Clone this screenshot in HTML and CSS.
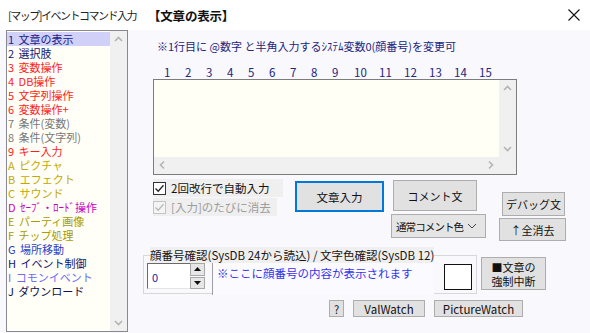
FILE: index.html
```html
<!DOCTYPE html>
<html lang="ja">
<head>
    <meta charset="UTF-8">
    <title>イベントコマンド入力</title>
    <link rel="stylesheet" href="styles.css">
</head>
<body>
    <div class="titlebar">
        <span class="wintitle">[マップ]イベントコマンド入力</span>
        <span class="cmdtitle">【文章の表示】</span>
        <svg class="close" width="12" height="12" viewBox="0 0 12 12"><path d="M0.5 0.5 L11.5 11.5 M11.5 0.5 L0.5 11.5" stroke="#111" stroke-width="1.1" fill="none"/></svg>
    </div>

    <div class="main">
        <div class="cmdlist">
            <ul class="items">
                <li class="sel c-blue">1 文章の表示</li>
                <li class="c-navy">2 選択肢</li>
                <li class="c-red">3 変数操作</li>
                <li class="c-red">4 DB操作</li>
                <li class="c-red">5 文字列操作</li>
                <li class="c-red">6 変数操作+</li>
                <li class="c-gray">7 条件(変数)</li>
                <li class="c-gray">8 条件(文字列)</li>
                <li class="c-red">9 キー入力</li>
                <li class="c-yellow">A ピクチャ</li>
                <li class="c-yellow">B エフェクト</li>
                <li class="c-yellow">C サウンド</li>
                <li class="c-magenta">D ｾｰﾌﾞ・ﾛｰﾄﾞ操作</li>
                <li class="c-olive">E パーティ画像</li>
                <li class="c-olive">F チップ処理</li>
                <li class="c-royal">G 場所移動</li>
                <li class="c-navy">H イベント制御</li>
                <li class="c-light">I コモンイベント</li>
                <li class="c-dark">J ダウンロード</li>
            </ul>
            <div class="vscroll">
                <svg width="17" height="17" viewBox="0 0 17 17"><path d="M5 10 L8.5 6.5 L12 10" stroke="#b4b4b4" stroke-width="1.6" fill="none"/></svg>
                <svg width="17" height="17" viewBox="0 0 17 17"><path d="M5 7 L8.5 10.5 L12 7" stroke="#b4b4b4" stroke-width="1.6" fill="none"/></svg>
            </div>
        </div>

        <div class="panel">
            <div class="note">※1行目に @数字 と半角入力するｼｽﾃﾑ変数0(顔番号)を変更可</div>
            <div class="ruler">
                <span>1</span><span>2</span><span>3</span><span>4</span><span>5</span><span>6</span><span>7</span><span>8</span><span class="w9">9</span><span class="wide">10</span><span class="wide">11</span><span class="wide">12</span><span class="wide">13</span><span class="wide">14</span><span class="wide">15</span>
            </div>
            <div class="editor">
                <div class="edit-top">
                    <div class="edit-area"></div>
                    <div class="vscroll small">
                        <svg width="17" height="17" viewBox="0 0 17 17"><path d="M5 10 L8.5 6.5 L12 10" stroke="#b4b4b4" stroke-width="1.6" fill="none"/></svg>
                        <svg width="17" height="17" viewBox="0 0 17 17"><path d="M5 7 L8.5 10.5 L12 7" stroke="#b4b4b4" stroke-width="1.6" fill="none"/></svg>
                    </div>
                </div>
                <div class="hscroll">
                    <svg width="17" height="16" viewBox="0 0 17 16"><path d="M10 4.5 L6.5 8 L10 11.5" stroke="#b4b4b4" stroke-width="1.6" fill="none"/></svg>
                    <svg width="17" height="16" viewBox="0 0 17 16"><path d="M7 4.5 L10.5 8 L7 11.5" stroke="#b4b4b4" stroke-width="1.6" fill="none"/></svg>
                    <div class="corner"></div>
                </div>
            </div>

            <div class="controls">
                <div class="checks">
                    <label class="check">
                        <span class="box"><svg width="11" height="11" viewBox="0 0 11 11"><path d="M1.5 5.5 L4.2 8.2 L9.5 2.2" stroke="#222" stroke-width="1.3" fill="none"/></svg></span>
                        2回改行で自動入力
                    </label>
                    <label class="check off">
                        <span class="box"><svg width="11" height="11" viewBox="0 0 11 11"><path d="M1.5 5.5 L4.2 8.2 L9.5 2.2" stroke="#b8b8b8" stroke-width="1.3" fill="none"/></svg></span>
                        [入力]のたびに消去
                    </label>
                </div>
                <button class="btn primary">文章入力</button>
                <div class="col-comment">
                    <button class="btn comment">コメント文</button>
                    <div class="select"><span>通常コメント色</span>
                        <svg width="10" height="6" viewBox="0 0 10 6"><path d="M1 1 L5 5 L9 1" stroke="#444" stroke-width="1" fill="none"/></svg>
                    </div>
                </div>
                <div class="col-debug">
                    <button class="btn debug">デバッグ文</button>
                    <button class="btn clear">↑全消去</button>
                </div>
            </div>

            <div class="group-row">
                <fieldset class="group">
                    <legend>顔番号確認(SysDB 24から読込) / 文字色確認(SysDB 12)</legend>
                    <div class="group-body">
                        <div class="spin">
                            <div class="spin-val">0</div>
                            <div class="spin-btns">
                                <span class="sb"><svg width="7" height="4" viewBox="0 0 7 4"><path d="M0 4 L3.5 0 L7 4 Z" fill="#111"/></svg></span>
                                <span class="sb"><svg width="7" height="4" viewBox="0 0 7 4"><path d="M0 0 L3.5 4 L7 0 Z" fill="#111"/></svg></span>
                            </div>
                        </div>
                        <div class="facetext">※ここに顔番号の内容が表示されます</div>
                        <div class="colorbox"></div>
                    </div>
                </fieldset>
                <button class="btn stop">■文章の<br>強制中断</button>
            </div>

            <div class="bottom">
                <button class="btn help">?</button>
                <button class="btn watch">ValWatch</button>
                <button class="btn picwatch">PictureWatch</button>
            </div>
        </div>
    </div>
</body>
</html>
```

FILE: styles.css
```css
body{
    margin: 0;
    width: 590px;
    height: 333px;
    overflow: hidden;
    background-color: #f8f8fd;
    font-family: "Noto Sans CJK JP", "Noto Sans", sans-serif;
    font-size: 11px;
    color: #1a1a1a;
}
.titlebar{
    display: flex;
    align-items: center;
    height: 30px;
    background-color: #ffffff;
}
.wintitle{
    margin-left: 8px;
    width: 140px;
    letter-spacing: -1.5px;
    font-size: 11px;
    color: #222;
}
.cmdtitle{
    font-size: 12.5px;
    font-weight: bold;
    color: #111;
    letter-spacing: -0.2px;
}
.close{
    margin-left: auto;
    margin-right: 10px;
}
.main{
    display: flex;
    height: 303px;
}

/* command list */
.cmdlist{
    display: flex;
    margin-left: 6px;
    width: 120px;
    height: 300px;
    border: 1px solid #86898f;
    background-color: #fffff8;
}
.items{
    list-style: none;
    margin: 0;
    padding: 1px 0 0 0;
    width: 103px;
}
.items li{
    height: 14px;
    line-height: 14px;
    padding-left: 1px;
    white-space: nowrap;
    word-spacing: 2px;
}
.items li.sel{
    background-color: #d0d0f8;
}
.vscroll{
    display: flex;
    flex-direction: column;
    justify-content: space-between;
    width: 17px;
    background-color: #f0f0f0;
}
.vscroll.small{
    height: 77px;
}
.c-blue{ color: #1c1c8a; }
.c-navy{ color: #141470; }
.c-red{ color: #ff1c1c; }
.c-gray{ color: #787878; }
.c-yellow{ color: #c4a800; }
.c-olive{ color: #a89a00; }
.c-magenta{ color: #c800c0; }
.c-royal{ color: #2a40c8; }
.c-light{ color: #6c6cf4; }
.c-dark{ color: #101050; }

/* right side */
.panel{
    display: flex;
    flex-direction: column;
    padding-left: 15px;
}
.note{
    margin: 9px 0 0 14px;
    line-height: 14px;
    color: #24247c;
}
.ruler{
    display: flex;
    margin: 12px 0 0 21px;
    line-height: 14px;
    color: #24247c;
    font-size: 11.5px;
}
.ruler span{
    width: 21px;
}
.ruler span.w9{
    width: 22px;
}
.ruler span.wide{
    width: 25px;
}
.editor{
    margin-left: 10px;
    width: 362px;
    height: 94px;
    border: 1px solid #7c7c7c;
}
.edit-top{
    display: flex;
    height: 77px;
}
.edit-area{
    flex: 1;
    background-color: #fffff6;
}
.hscroll{
    display: flex;
    height: 17px;
    background-color: #f0f0f0;
}
.hscroll svg:nth-child(2){
    margin-left: auto;
}
.corner{
    width: 17px;
}

.controls{
    display: flex;
    margin: 4px 0 0 10px;
    height: 62px;
}
.checks{
    display: flex;
    flex-direction: column;
    gap: 1px;
    width: 130px;
}
.check{
    display: flex;
    align-items: center;
    gap: 5px;
    height: 18px;
    background-color: #efefef;
    color: #111;
    font-size: 11.5px;
}
.check.off{
    width: 124px;
    color: #9c9c9c;
}
.box{
    display: flex;
    align-items: center;
    justify-content: center;
    width: 11px;
    height: 11px;
    border: 1px solid #333;
    background-color: #fff;
}
.check.off .box{
    border-color: #c4c4c4;
    background-color: #f4f4f4;
}
.btn{
    margin: 0;
    padding: 0;
    background-color: #e1e1e1;
    border: 1px solid #adadad;
    font-family: "Noto Sans CJK JP", "Noto Sans", sans-serif;
    font-size: 11px;
    color: #111;
}
.primary{
    margin: 2px 0 0 12px;
    width: 89px;
    height: 31px;
    border: 2px solid #0078d7;
    font-size: 11.5px;
}
.col-comment{
    display: flex;
    flex-direction: column;
    margin-left: 7px;
}
.comment{
    margin: 1px 0 0 2px;
    width: 84px;
    height: 31px;
}
.select{
    display: flex;
    align-items: center;
    justify-content: space-between;
    margin-top: 3px;
    padding: 0 8px 0 4px;
    width: 81px;
    height: 22px;
    background-color: #e5e5e5;
    border: 1px solid #adadad;
    color: #111;
    white-space: nowrap;
    font-size: 10.5px;
    letter-spacing: -0.9px;
}
.col-debug{
    display: flex;
    flex-direction: column;
    margin-left: 13px;
}
.debug{
    margin: 13px 0 0 3px;
    width: 63px;
    height: 24px;
}
.clear{
    margin-top: 2px;
    width: 67px;
    height: 23px;
}

.group-row{
    display: flex;
    margin-top: 6px;
}
.group{
    margin: 0;
    padding: 0 3px 0 3px;
    width: 326px;
    height: 45px;
    border: 1px solid #d8d8d8;
}
.group legend{
    margin-left: 3px;
    padding: 0;
    height: 16px;
    line-height: 16px;
    background-color: #efefef;
    color: #151515;
    font-size: 11.5px;
    white-space: nowrap;
}
.group-body{
    display: flex;
    height: 35px;
}
.spin{
    display: flex;
    height: 26px;
}
.spin-val{
    width: 38px;
    padding-left: 4px;
    line-height: 26px;
    background-color: #fff;
    border-top: 1px solid #6a6a6a;
    border-left: 1px solid #6a6a6a;
    border-bottom: 1px solid #e4e4e4;
    height: 24px;
    color: #1a1a9a;
}
.spin-btns{
    display: flex;
    flex-direction: column;
    gap: 1px;
    width: 15px;
}
.sb{
    display: flex;
    align-items: center;
    justify-content: center;
    height: 11px;
    background-color: #e6e6e6;
    border: 1px solid #a8a8a8;
}
.facetext{
    margin-left: 7px;
    padding: 2px 0 0 4px;
    width: 217px;
    height: 30px;
    border-left: 1px solid #a0a0a0;
    background-color: #fbfbff;
    color: #3434ee;
    font-size: 11.5px;
    white-space: nowrap;
}
.colorbox{
    margin: 1px 0 0 10px;
    width: 26px;
    height: 24px;
    border: 1px solid #111;
    background-color: #fff;
}
.stop{
    margin: 10px 0 0 4px;
    width: 65px;
    height: 33px;
    line-height: 14px;
}
.bottom{
    display: flex;
    gap: 9px;
    margin: 6px 0 0 186px;
}
.help{
    width: 15px;
    height: 17px;
}
.watch{
    width: 72px;
    height: 17px;
    font-size: 11.5px;
}
.picwatch{
    width: 89px;
    height: 17px;
    font-size: 11.5px;
}
```
